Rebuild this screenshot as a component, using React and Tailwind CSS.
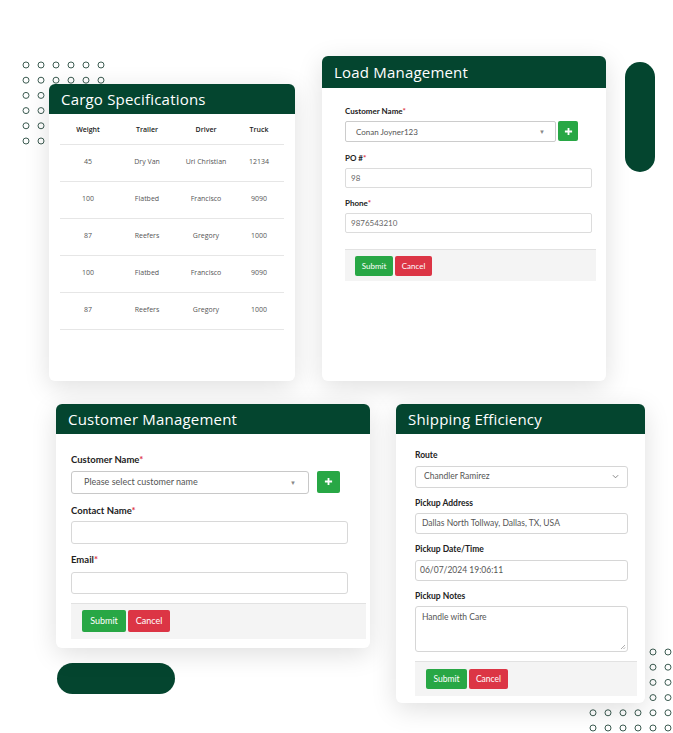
import React from "react";

const green = "bg-[#04452f]";

function Dots({ cols, rows, className }) {
  const circles = [];
  for (let r = 0; r < rows; r++) {
    for (let c = 0; c < cols; c++) {
      circles.push(
        <circle key={`${r}-${c}`} cx={5 + c * 15} cy={5 + r * 15.2} r="3" fill="none" stroke="#3b5a50" strokeWidth="1" />
      );
    }
  }
  return (
    <svg className={className} width={cols * 15} height={rows * 15.2} viewBox={`0 0 ${cols * 15} ${rows * 15.2}`}>
      {circles}
    </svg>
  );
}

function CardHeader({ title, h = "h-[30px]" }) {
  return (
    <div className={`${green} ${h} rounded-t-[6px] flex items-center px-3`}>
      <span className="text-white text-[15px] font-['Open_Sans',sans-serif] tracking-[0.2px]">{title}</span>
    </div>
  );
}

function Label({ children, req, size = "text-[8px]" }) {
  return (
    <div className={`${size} font-bold text-[#222] font-['Lato',sans-serif] leading-none`}>
      {children}
      {req && <span className="text-[#dc3545]">*</span>}
    </div>
  );
}

function Plus({ size }) {
  return (
    <div className={`${size} bg-[#28a745] rounded-[2px] flex items-center justify-center shrink-0`}>
      <svg width="9" height="9" viewBox="0 0 10 10">
        <path d="M5 1v8M1 5h8" stroke="white" strokeWidth="2" />
      </svg>
    </div>
  );
}

const rows = [
  ["45", "Dry Van", "Uri Christian", "12134"],
  ["100", "Flatbed", "Francisco", "9090"],
  ["87", "Reefers", "Gregory", "1000"],
  ["100", "Flatbed", "Francisco", "9090"],
  ["87", "Reefers", "Gregory", "1000"],
];

export default function App() {
  const shadow = "shadow-[0_6px_26px_rgba(0,0,0,0.13)]";
  return (
    <div className="relative w-[673px] h-[733px] overflow-hidden bg-white font-['Lato',sans-serif]">
      <Dots cols={6} rows={6} className="absolute left-[21px] top-[60px]" />
      <Dots cols={6} rows={6} className="absolute left-[588px] top-[647px]" />

      <div className={`absolute left-[625px] top-[62px] w-[30px] h-[110px] rounded-full ${green}`} />
      <div className={`absolute left-[57px] top-[663px] w-[118px] h-[31px] rounded-full ${green}`} />

      {/* Cargo Specifications */}
      <div className={`absolute left-[49px] top-[84px] w-[246px] h-[297px] bg-white rounded-[6px] ${shadow}`}>
        <CardHeader title="Cargo Specifications" />
        <div className="px-[11px] pt-[3px]">
          <table className="w-full text-center font-['Open_Sans',sans-serif] border-collapse">
            <thead>
              <tr className="h-[27px] border-b border-[#e6e6e6]">
                <th className="text-[7px] font-semibold text-[#222] w-[56px]">Weight</th>
                <th className="text-[7px] font-semibold text-[#222] w-[62px]">Trailer</th>
                <th className="text-[7px] font-semibold text-[#222] w-[56px]">Driver</th>
                <th className="text-[7px] font-semibold text-[#222]">Truck</th>
              </tr>
            </thead>
            <tbody>
              {rows.map((r, i) => (
                <tr key={i} className="h-[37px] border-b border-[#e6e6e6]">
                  {r.map((c, j) => (
                    <td key={j} className="text-[7px] text-[#555]">{c}</td>
                  ))}
                </tr>
              ))}
            </tbody>
          </table>
        </div>
      </div>

      {/* Load Management */}
      <div className={`absolute left-[322px] top-[56px] w-[284px] h-[325px] bg-white rounded-[6px] ${shadow}`}>
        <CardHeader title="Load Management" h="h-[32px]" />
        <div className="pl-[23px] pr-[10px] pt-[19px]">
          <Label req>Customer Name</Label>
          <div className="flex gap-[2px] mt-[6px]">
            <div className="w-[211px] h-[21px] border border-[#ccc] rounded-[2px] flex items-center justify-between px-[10px]">
              <span className="text-[8px] text-[#555]">Conan Joyner123</span>
              <span className="text-[6px] text-[#888]">▼</span>
            </div>
            <Plus size="w-[20px] h-[20px]" />
          </div>
          <div className="mt-[12px]"><Label req>PO #</Label></div>
          <div className="mt-[6px] w-[247px] h-[20px] border border-[#dcdcdc] rounded-[2px] flex items-center px-[5px] text-[8px] text-[#666]">98</div>
          <div className="mt-[11px]"><Label req>Phone</Label></div>
          <div className="mt-[6px] w-[247px] h-[20px] border border-[#dcdcdc] rounded-[2px] flex items-center px-[5px] text-[8px] text-[#666]">9876543210</div>
          <div className="mt-[16px] w-[251px] h-[32px] bg-[#f4f4f4] border-t border-[#e2e2e2] flex items-center gap-[2px] pl-[10px]">
            <div className="w-[38px] h-[20px] bg-[#28a745] text-white text-[8px] rounded-[2px] flex items-center justify-center">Submit</div>
            <div className="w-[37px] h-[20px] bg-[#dc3545] text-white text-[8px] rounded-[2px] flex items-center justify-center">Cancel</div>
          </div>
        </div>
      </div>

      {/* Customer Management */}
      <div className={`absolute left-[56px] top-[404px] w-[314px] h-[244px] bg-white rounded-[6px] ${shadow}`}>
        <CardHeader title="Customer Management" />
        <div className="pl-[15px] pr-[4px] pt-[21px]">
          <Label req size="text-[9.5px]">Customer Name</Label>
          <div className="flex gap-[8px] mt-[6px]">
            <div className="w-[238px] h-[23px] border border-[#c8c8c8] rounded-[3px] flex items-center justify-between px-[12px]">
              <span className="text-[9px] text-[#555]">Please select customer name</span>
              <span className="text-[6px] text-[#888]">▼</span>
            </div>
            <Plus size="w-[23px] h-[22px]" />
          </div>
          <div className="mt-[12px]"><Label req size="text-[9.5px]">Contact Name</Label></div>
          <div className="mt-[6px] w-[277px] h-[23px] border border-[#d8d8d8] rounded-[3px]" />
          <div className="mt-[11px]"><Label req size="text-[9.5px]">Email</Label></div>
          <div className="mt-[7px] w-[277px] h-[22px] border border-[#d8d8d8] rounded-[3px]" />
          <div className="mt-[9px] w-[295px] h-[36px] bg-[#f4f4f4] border-t border-[#e2e2e2] flex items-center gap-[2px] pl-[11px]">
            <div className="w-[44px] h-[22px] bg-[#28a745] text-white text-[9px] rounded-[2px] flex items-center justify-center">Submit</div>
            <div className="w-[42px] h-[22px] bg-[#dc3545] text-white text-[9px] rounded-[2px] flex items-center justify-center">Cancel</div>
          </div>
        </div>
      </div>

      {/* Shipping Efficiency */}
      <div className={`absolute left-[396px] top-[404px] w-[249px] h-[299px] bg-white rounded-[6px] ${shadow}`}>
        <CardHeader title="Shipping Efficiency" />
        <div className="pl-[19px] pr-[8px] pt-[17px]">
          <Label size="text-[8.5px]">Route</Label>
          <div className="mt-[6px] w-[213px] h-[22px] border border-[#d6d6d6] rounded-[3px] flex items-center justify-between px-[8px]">
            <span className="text-[8.5px] text-[#555]">Chandler Ramirez</span>
            <svg width="7" height="5" viewBox="0 0 8 5"><path d="M1 1l3 3 3-3" fill="none" stroke="#777" strokeWidth="1" /></svg>
          </div>
          <div className="mt-[11px]"><Label size="text-[8.5px]">Pickup Address</Label></div>
          <div className="mt-[6px] w-[213px] h-[21px] border border-[#d6d6d6] rounded-[3px] flex items-center px-[6px] text-[8.5px] text-[#555]">Dallas North Tollway, Dallas, TX, USA</div>
          <div className="mt-[11px]"><Label size="text-[8.5px]">Pickup Date/Time</Label></div>
          <div className="mt-[6px] w-[213px] h-[21px] border border-[#d6d6d6] rounded-[3px] flex items-center px-[4px] text-[8.5px] text-[#555]">06/07/2024 19:06:11</div>
          <div className="mt-[11px]"><Label size="text-[8.5px]">Pickup Notes</Label></div>
          <div className="relative mt-[6px] w-[213px] h-[46px] border border-[#d6d6d6] rounded-[3px] px-[6px] pt-[4px] text-[8.5px] text-[#555]">
            Handle with Care
            <svg className="absolute right-[1px] bottom-[1px]" width="6" height="6" viewBox="0 0 6 6"><path d="M1 5l4-4M3.5 5L5 3.5" stroke="#999" strokeWidth="0.8" /></svg>
          </div>
          <div className="mt-[9px] w-[222px] h-[35px] bg-[#f4f4f4] border-t border-[#e2e2e2] flex items-center gap-[2px] pl-[11px]">
            <div className="w-[41px] h-[20px] bg-[#28a745] text-white text-[8.5px] rounded-[2px] flex items-center justify-center">Submit</div>
            <div className="w-[39px] h-[20px] bg-[#dc3545] text-white text-[8.5px] rounded-[2px] flex items-center justify-center">Cancel</div>
          </div>
        </div>
      </div>
    </div>
  );
}
